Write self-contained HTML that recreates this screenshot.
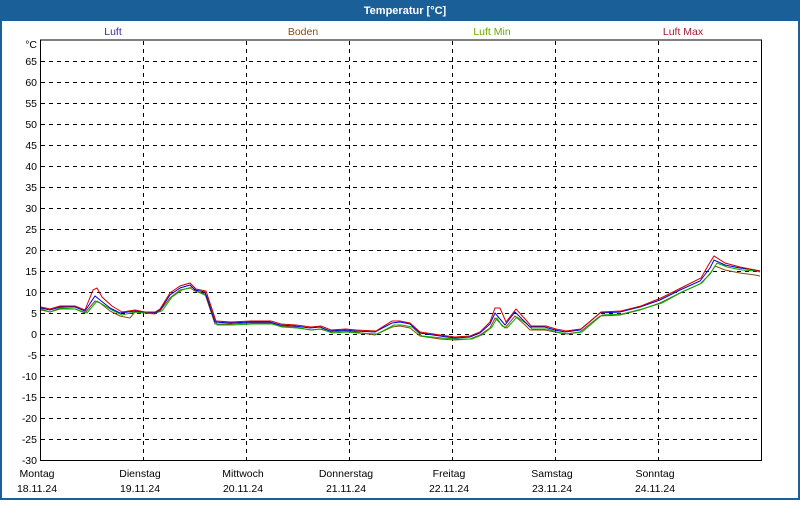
<!DOCTYPE html>
<html><head><meta charset="utf-8"><style>
html,body{margin:0;padding:0;background:#fff}
body{width:800px;height:500px;overflow:hidden;font-family:"Liberation Sans",sans-serif}
</style></head><body>
<svg width="800" height="500" xmlns="http://www.w3.org/2000/svg" font-family="Liberation Sans, sans-serif" font-size="10.5">
<rect x="0" y="0" width="800" height="500" fill="#1b5f98"/>
<rect x="2" y="21" width="796" height="477" fill="#fff"/>
<text x="405" y="14" fill="#fff" font-weight="bold" font-size="11" text-anchor="middle">Temperatur [°C]</text>
<text x="113" y="35" fill="#3b2a9a" text-anchor="middle">Luft</text>
<text x="303" y="35" fill="#8b4a10" text-anchor="middle">Boden</text>
<text x="492" y="35" fill="#6aaa00" text-anchor="middle">Luft Min</text>
<text x="683" y="35" fill="#a0203a" text-anchor="middle">Luft Max</text>
<g stroke="#000" stroke-width="1" stroke-dasharray="4,4" fill="none">
<path d="M41 61.5H761M41 82.5H761M41 103.5H761M41 124.5H761M41 145.5H761M41 166.5H761M41 187.5H761M41 208.5H761M41 229.5H761M41 250.5H761M41 271.5H761M41 292.5H761M41 313.5H761M41 334.5H761M41 355.5H761M41 376.5H761M41 397.5H761M41 418.5H761M41 439.5H761"/>
<path d="M143.5 41V465M246.5 41V465M349.5 41V465M452.5 41V465M555.5 41V465M658.5 41V465"/>
</g>
<path d="M40.5 40V460.5H761.5V40Z" fill="none" stroke="#000" stroke-width="1"/>
<g fill="#000" text-anchor="end">
<text x="37" y="48">°C</text>
<text x="37" y="65">65</text><text x="37" y="86">60</text><text x="37" y="107">55</text><text x="37" y="128">50</text>
<text x="37" y="149">45</text><text x="37" y="170">40</text><text x="37" y="191">35</text><text x="37" y="212">30</text>
<text x="37" y="233">25</text><text x="37" y="254">20</text><text x="37" y="275">15</text><text x="37" y="296">10</text>
<text x="37" y="317">5</text><text x="37" y="338">0</text><text x="37" y="359">-5</text><text x="37" y="380">-10</text>
<text x="37" y="401">-15</text><text x="37" y="422">-20</text><text x="37" y="443">-25</text><text x="37" y="464">-30</text>
</g>
<g fill="#000" text-anchor="middle">
<text x="37" y="477">Montag</text><text x="37" y="492">18.11.24</text>
<text x="140" y="477">Dienstag</text><text x="140" y="492">19.11.24</text>
<text x="243" y="477">Mittwoch</text><text x="243" y="492">20.11.24</text>
<text x="346" y="477">Donnerstag</text><text x="346" y="492">21.11.24</text>
<text x="449" y="477">Freitag</text><text x="449" y="492">22.11.24</text>
<text x="552" y="477">Samstag</text><text x="552" y="492">23.11.24</text>
<text x="655" y="477">Sonntag</text><text x="655" y="492">24.11.24</text>
</g>
<g fill="none" stroke-width="1">
<polyline stroke="#8b4a10" points="41,310 50,312 60,309 75,309 85,313 95,301 100,303 110,311 120,316 130,318 135,312 145,313 155,314 160,311 170,298 180,290 190,288 195,291 205,294 215,324 230,324 250,323 270,323 280,326 295,327 310,330 320,329 330,332 345,331 355,332 375,335 392,327 400,326 410,328 420,336 440,339 455,340 470,339 480,335 490,328 495,318 500,323 505,328 515,316 525,325 530,330 545,330 555,332 565,334 580,332 600,316 620,315 640,310 660,303 680,293 700,284 710,274 715,266 725,270 740,273 755,275 760,276"/>
<polyline stroke="#00b000" points="41,309 50,312 60,308 75,309 87,313 97,301 102,304 112,310 122,315 135,312 145,313 155,313 162,311 172,297 182,290 192,287 198,292 207,296 217,325 232,325 252,324 272,324 282,327 297,328 312,330 322,329 332,333 347,332 357,333 377,334 394,325 402,325 412,327 422,336 442,338 457,339 472,339 482,335 492,327 497,318 502,326 507,328 517,317 527,324 532,329 547,329 557,332 567,334 582,332 602,315 622,314 642,309 662,303 682,292 702,283 712,271 717,263 727,267 742,270 757,271 760,272"/>
<polyline stroke="#0000e0" points="41,308 50,310 60,307 75,307 85,311 95,296 100,300 110,308 120,313 135,311 145,312 155,313 160,310 170,295 180,288 190,285 195,290 205,292 215,322 230,323 250,322 270,322 280,325 295,326 310,328 320,327 330,331 345,330 355,331 375,332 392,323 400,322 410,324 420,333 440,336 455,338 470,337 480,333 490,324 495,313 500,319 505,325 515,312 525,322 530,327 545,327 555,330 565,332 580,330 600,313 620,312 640,307 660,300 680,290 700,281 710,268 714,260 725,265 740,268 755,270 760,271"/>
<polyline stroke="#d00000" points="41,307 50,309 60,306 75,306 85,310 93,290 97,288 102,297 112,306 122,312 135,310 145,312 155,312 160,309 170,293 180,286 190,283 196,289 206,291 216,321 231,322 251,321 271,321 281,324 296,325 311,327 321,326 331,330 346,329 356,330 376,331 392,321 400,321 410,323 420,332 440,335 455,337 470,336 480,332 490,322 495,308 500,308 506,322 516,309 526,320 531,326 546,326 556,329 566,331 581,329 601,312 621,311 641,306 661,298 681,288 701,278 709,264 714,256 725,263 740,267 755,270 760,271"/>
</g>
</svg>
</body></html>
